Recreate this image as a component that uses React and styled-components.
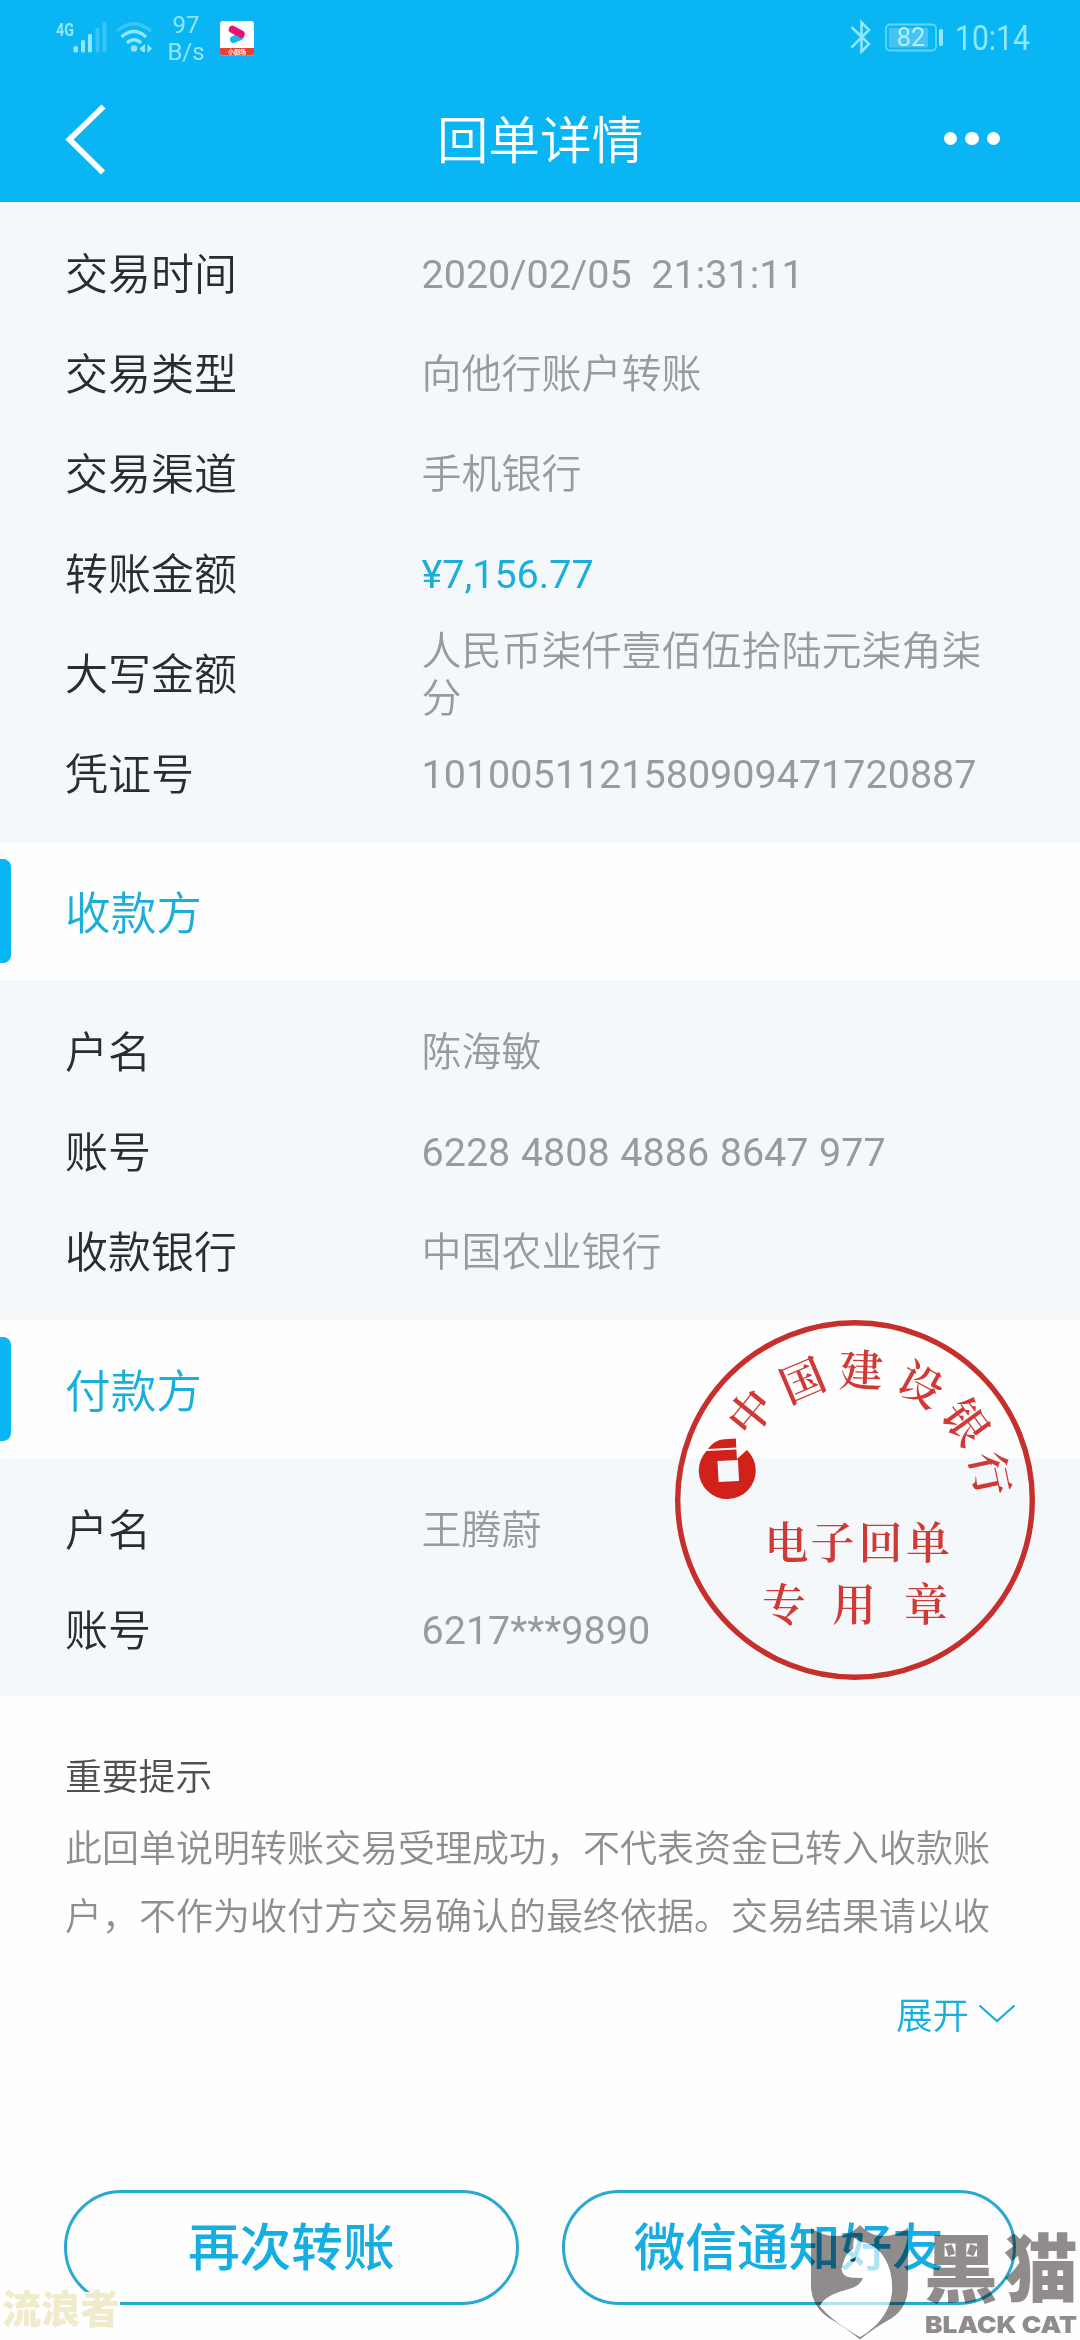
import React from 'react';
import styled, { createGlobalStyle } from 'styled-components';

const GlobalStyle = createGlobalStyle`
  * {
    box-sizing: border-box;
  }

  body {
    margin: 0;
    background: #fefefe;
    font-family: Roboto, 'Noto Sans CJK SC', sans-serif;
  }
`;

const Page = styled.div`
  position: relative;
  display: flex;
  flex-direction: column;
  width: 1080px;
  height: 2340px;
  overflow: hidden;
  background: #fefefe;
`;

const Header = styled.header`
  height: 202px;
  background: #0ab5f3;
  color: #ffffff;
`;

const StatusBar = styled.div`
  display: flex;
  justify-content: space-between;
  height: 75px;
  padding: 0 51px 0 54px;
  color: #8fe6fd;
`;

const StatusGroup = styled.div`
  display: flex;
  align-items: center;
`;

const NetSpeed = styled.div`
  width: 40px;
  margin: 2px 14px 0 11px;
  font-size: 24px;
  line-height: 27px;
  text-align: center;
`;

const Clock = styled.span`
  width: 74px;
  margin-left: 11px;
  padding-top: 1px;
  font-size: 35px;
  line-height: 75px;
  white-space: nowrap;
  transform: scaleX(0.86);
  transform-origin: left center;
`;

const NavBar = styled.div`
  display: grid;
  grid-template-columns: 1fr auto 1fr;
  align-items: center;
  height: 127px;
  padding: 0 80px 0 64px;
`;

const Title = styled.h1`
  margin: 7px 0 0 16px;
  font-size: 51.7px;
  font-weight: 350;
  line-height: 60px;
`;

const MoreDots = styled.div`
  display: flex;
  justify-content: flex-end;
  gap: 8px;

  span {
    width: 13.5px;
    height: 13.5px;
    border-radius: 50%;
    background: #ffffff;
  }
`;

const Panel = styled.section`
  height: ${(props) => props.$height}px;
  padding: 22px 65px 0;
  background: #f4f8fb;
`;

const Row = styled.div`
  display: flex;
  align-items: center;
  height: 100px;
`;

const Label = styled.span`
  flex: 0 0 356.5px;
  margin-top: -7px;
  font-size: 43px;
  font-weight: 350;
  color: #2b2c30;
`;

const Value = styled.span`
  width: 575px;
  padding-top: ${(props) => (props.$latin ? 2 : 3)}px;
  font-size: ${(props) => (props.$latin ? 39.5 : 40)}px;
  font-weight: ${(props) => (props.$latin ? 400 : 350)};
  line-height: 46.5px;
  word-spacing: ${(props) => (props.$grouped ? 0.8 : 0)}px;
  white-space: pre-wrap;
  color: ${(props) => (props.$accent ? '#1aaedb' : '#999a9c')};
`;

const SectionTitle = styled.h2`
  display: flex;
  align-items: center;
  height: 138px;
  margin: 0;
  background: #fefefe;
  font-size: 45.7px;
  font-weight: 350;
  line-height: 60px;
  color: #1aaedb;

  &::before {
    content: '';
    width: 11px;
    height: 104px;
    margin-right: 54px;
    border-radius: 0 8px 8px 0;
    background: #0ab5f3;
  }
`;

const SectionName = styled.span`
  padding-top: 7px;
`;

const Notice = styled.section`
  height: 494px;
  padding: 55px 65px 0;
  font-size: 37px;
  font-weight: 350;
`;

const NoticeTitle = styled.h3`
  margin: 0;
  font-size: 36.8px;
  font-weight: 350;
  line-height: 54px;
  color: #505052;
`;

const NoticeText = styled.p`
  width: 930px;
  margin: 11px 0 0;
  line-height: 68px;
  color: #8e8e90;
`;

const ExpandLink = styled.div`
  display: flex;
  justify-content: flex-end;
  align-items: center;
  gap: 10px;
  margin-top: 38px;
  font-size: 36.5px;
  line-height: 54px;
  color: #1aaedb;
`;

const Actions = styled.div`
  display: flex;
  gap: 43px;
  padding: 0 64px;
`;

const ActionButton = styled.button`
  flex: 1;
  height: 115px;
  padding: 2px 0 0;
  border: 3px solid #2aa9d0;
  border-radius: 58px;
  background: transparent;
  font-family: inherit;
  font-size: 51.7px;
  font-weight: 500;
  line-height: 1;
  color: #16aee2;
`;

const SealMark = styled.svg`
  position: absolute;
  left: 675px;
  top: 1320px;
  font-family: 'Noto Serif CJK SC', 'Noto Sans CJK SC', serif;
  font-weight: 600;
`;

const UserMark = styled.div`
  position: absolute;
  left: 0;
  top: 2292px;
  width: 120px;
  height: 40px;
  padding-left: 2px;
  background: #fefefe;
  font-size: 39.2px;
  font-weight: 900;
  line-height: 37px;
  white-space: nowrap;
  color: #f0ebcb;
`;

const CatMark = styled.svg`
  position: absolute;
  left: 780px;
  top: 2210px;

  .ink {
    mix-blend-mode: multiply;
  }
`;

const Bluetooth = styled.svg`
  margin-right: 12px;
`;

const SignalIcon = () => (
  <svg width="54" height="75" viewBox="54 0 54 75" fill="#8fe6fd">
    <text x="56" y="35.5" fontSize="19" fontWeight="700" textLength="18" lengthAdjust="spacingAndGlyphs">
      4G
    </text>
    <rect x="73.5" y="46" width="4.5" height="6.5" rx="1.5" />
    <rect x="81" y="40" width="4" height="12.5" rx="1.5" />
    <rect x="88" y="34" width="4" height="18.5" rx="1.5" />
    <rect x="95.5" y="28" width="4" height="24.5" rx="1.5" opacity="0.35" />
    <rect x="102.5" y="22" width="4" height="30.5" rx="1.5" opacity="0.35" />
  </svg>
);

const WifiIcon = () => (
  <svg width="47" height="75" viewBox="108 0 47 75" fill="none" stroke="#8fe6fd" strokeWidth="3.2">
    <path d="M117 31 Q134 16.5 151 31" opacity="0.35" />
    <path d="M121.5 37 Q134 26 146 37" />
    <path d="M127 43 Q134 36.5 141 43" />
    <circle cx="134" cy="48.5" r="3.2" fill="#8fe6fd" stroke="none" />
    <path d="M145 44 V52 H142.5 L139.5 48.5 Z M147.5 44 L152 48.5 L147.5 53 Z" fill="#8fe6fd" stroke="none" />
  </svg>
);

const AppIcon = () => (
  <svg width="34" height="75" viewBox="0 0 34 75">
    <rect y="21" width="34" height="34.5" rx="3" fill="#ffffff" />
    <path d="M0 48 H34 V52.5 Q34 55.5 31 55.5 H3 Q0 55.5 0 52.5 Z" fill="#ea3f32" />
    <path d="M13.5 39.5 L20.5 36.5" stroke="#19b6e8" strokeWidth="7" strokeLinecap="round" />
    <path d="M12.5 29.5 L21 34" stroke="#ec0f74" strokeWidth="7.5" strokeLinecap="round" />
    <text x="17" y="54" fontSize="6" fontWeight="700" textAnchor="middle" fill="#ffffff">
      小剧场
    </text>
  </svg>
);

const BluetoothIcon = () => (
  <Bluetooth width="22" height="75" viewBox="850 0 22 75" fill="none" stroke="#8fe6fd" strokeWidth="2.6">
    <path d="M851.5 27 L869 44 L861.5 51.5 V22.5 L869 30 L851.5 47.5" />
  </Bluetooth>
);

const BatteryIcon = () => (
  <svg width="60" height="75" viewBox="884 0 60 75">
    <rect x="886" y="24.5" width="50" height="26" rx="4" fill="none" stroke="#5bd8fb" strokeWidth="1.8" />
    <rect x="889" y="28" width="39" height="19.5" fill="#45c3f5" />
    <rect x="939" y="29" width="4" height="17" rx="1.5" fill="#8fe6fd" />
    <text x="911" y="46" fontSize="25.5" textAnchor="middle" fill="#b4effe">
      82
    </text>
  </svg>
);

const BackIcon = () => (
  <svg width="44" height="72" viewBox="64 102 44 72" fill="none" stroke="#ffffff" strokeWidth="5.8">
    <path d="M103.5 105.5 L69.5 138.5 L103 171.5" />
  </svg>
);

const ChevronIcon = () => (
  <svg width="36" height="26" viewBox="0 0 36 26" fill="none" stroke="#1aaedb" strokeWidth="2.2">
    <path d="M0.5 1.5 L18 17 L35.5 1.5" />
  </svg>
);

const sealArc = [
  { char: '中', x: 75.7, y: 92.3, angle: -51 },
  { char: '国', x: 127.6, y: 60.6, angle: -23 },
  { char: '建', x: 186, y: 50.6, angle: 2 },
  { char: '设', x: 245.6, y: 65, angle: 29 },
  { char: '银', x: 291, y: 102.3, angle: 54 },
  { char: '行', x: 315, y: 154, angle: 78 },
];

const Seal = () => (
  <SealMark width="362" height="362" viewBox="0 0 362 362" fill="#d03a36" fontSize="44" textAnchor="middle">
    <circle cx="180" cy="180" r="177.3" fill="none" stroke="#c62f2b" strokeWidth="5.4" />
    {sealArc.map(({ char, x, y, angle }) => (
      <text key={char} transform={`translate(${x} ${y}) rotate(${angle})`} y="16">
        {char}
      </text>
    ))}
    <g transform="rotate(-3 52.7 150.7)" fill="#d0211b">
      <path
        fillRule="evenodd"
        d="M32.5 130 H62.5 V139.5 L73 131 A28.5 28.5 0 1 1 32.5 130 Z M43 140.5 V161.5 H63.5 V140.5 Z"
      />
      <path d="M34 128 Q41 119 51 119 H62.5 V128 Z" />
    </g>
    <g>
      <text x="111.5" y="239">电</text>
      <text x="157.5" y="239">子</text>
      <text x="205.5" y="239">回</text>
      <text x="253" y="239">单</text>
    </g>
    <g>
      <text x="109" y="300.5">专</text>
      <text x="179" y="300.5">用</text>
      <text x="251" y="300.5">章</text>
    </g>
  </SealMark>
);

const catPath =
  'M74 28 L73 39 Q66 43 64 51 L61.5 59 Q63 67 71 67.5 L83 68 Q80 77 66 80 Q44 86 40 96 Q52 111 80 127 Q109 110 112 82 Q113 54 97 39 Q90 33 81 32 Z';
const shieldPath =
  'M31 18 Q47 29 64 25 Q74 22 80 15 Q86 22 95 25 Q112 29 128 18 V78 Q127 98 112 108 Q94 118 80 129.5 Q66 118 49 108 Q33 98 31 78 Z';

const BlackCat = () => (
  <CatMark width="300" height="130" viewBox="0 0 300 130">
    <g className="ink" fill="#918d8d">
      <path fillRule="evenodd" d={`${shieldPath} ${catPath}`} />
      <text x="144" y="86" fontSize="74" fontWeight="900" fontFamily="'Noto Sans CJK SC', sans-serif" textLength="154">
        黑猫
      </text>
      <text x="145" y="122.5" fontSize="23.5" fontWeight="900" fontFamily="Inter, sans-serif" textLength="152" lengthAdjust="spacingAndGlyphs">
        BLACK CAT
      </text>
    </g>
    <path fill="#ffffff" opacity="0.65" d={catPath} />
    <path fill="#153f55" d="M70 50 L76 47 L75 51 L72 52 Z" />
  </CatMark>
);

const tradeRows = [
  { label: '交易时间', value: '2020/02/05  21:31:11', latin: true },
  { label: '交易类型', value: '向他行账户转账' },
  { label: '交易渠道', value: '手机银行' },
  { label: '转账金额', value: '¥7,156.77', latin: true, accent: true },
  { label: '大写金额', value: '人民币柒仟壹佰伍拾陆元柒角柒分' },
  { label: '凭证号', value: '1010051121580909471720887', latin: true },
];

const payeeRows = [
  { label: '户名', value: '陈海敏' },
  { label: '账号', value: '6228 4808 4886 8647 977', latin: true, grouped: true },
  { label: '收款银行', value: '中国农业银行' },
];

const payerRows = [
  { label: '户名', value: '王腾蔚' },
  { label: '账号', value: '6217***9890', latin: true },
];

const DetailPanel = ({ rows, height }) => (
  <Panel $height={height}>
    {rows.map((row) => (
      <Row key={row.label}>
        <Label>{row.label}</Label>
        <Value $latin={row.latin} $accent={row.accent} $grouped={row.grouped}>
          {row.value}
        </Value>
      </Row>
    ))}
  </Panel>
);

const App = () => {
  return (
    <>
      <GlobalStyle />
      <Page lang="zh-CN">
        <Header>
          <StatusBar>
            <StatusGroup>
              <SignalIcon />
              <WifiIcon />
              <NetSpeed>
                97
                <br />
                B/s
              </NetSpeed>
              <AppIcon />
            </StatusGroup>
            <StatusGroup>
              <BluetoothIcon />
              <BatteryIcon />
              <Clock>10:14</Clock>
            </StatusGroup>
          </StatusBar>
          <NavBar>
            <BackIcon />
            <Title>回单详情</Title>
            <MoreDots>
              <span />
              <span />
              <span />
            </MoreDots>
          </NavBar>
        </Header>

        <DetailPanel rows={tradeRows} height={640} />
        <SectionTitle>
          <SectionName>收款方</SectionName>
        </SectionTitle>
        <DetailPanel rows={payeeRows} height={340} />
        <SectionTitle>
          <SectionName>付款方</SectionName>
        </SectionTitle>
        <DetailPanel rows={payerRows} height={238} />

        <Notice>
          <NoticeTitle>重要提示</NoticeTitle>
          <NoticeText>
            此回单说明转账交易受理成功，不代表资金已转入收款账户，不作为收付方交易确认的最终依据。交易结果请以收
          </NoticeText>
          <ExpandLink>
            展开
            <ChevronIcon />
          </ExpandLink>
        </Notice>

        <Actions>
          <ActionButton>再次转账</ActionButton>
          <ActionButton>微信通知好友</ActionButton>
        </Actions>

        <Seal />
        <UserMark>流浪者</UserMark>
        <BlackCat />
      </Page>
    </>
  );
};

export default App;
